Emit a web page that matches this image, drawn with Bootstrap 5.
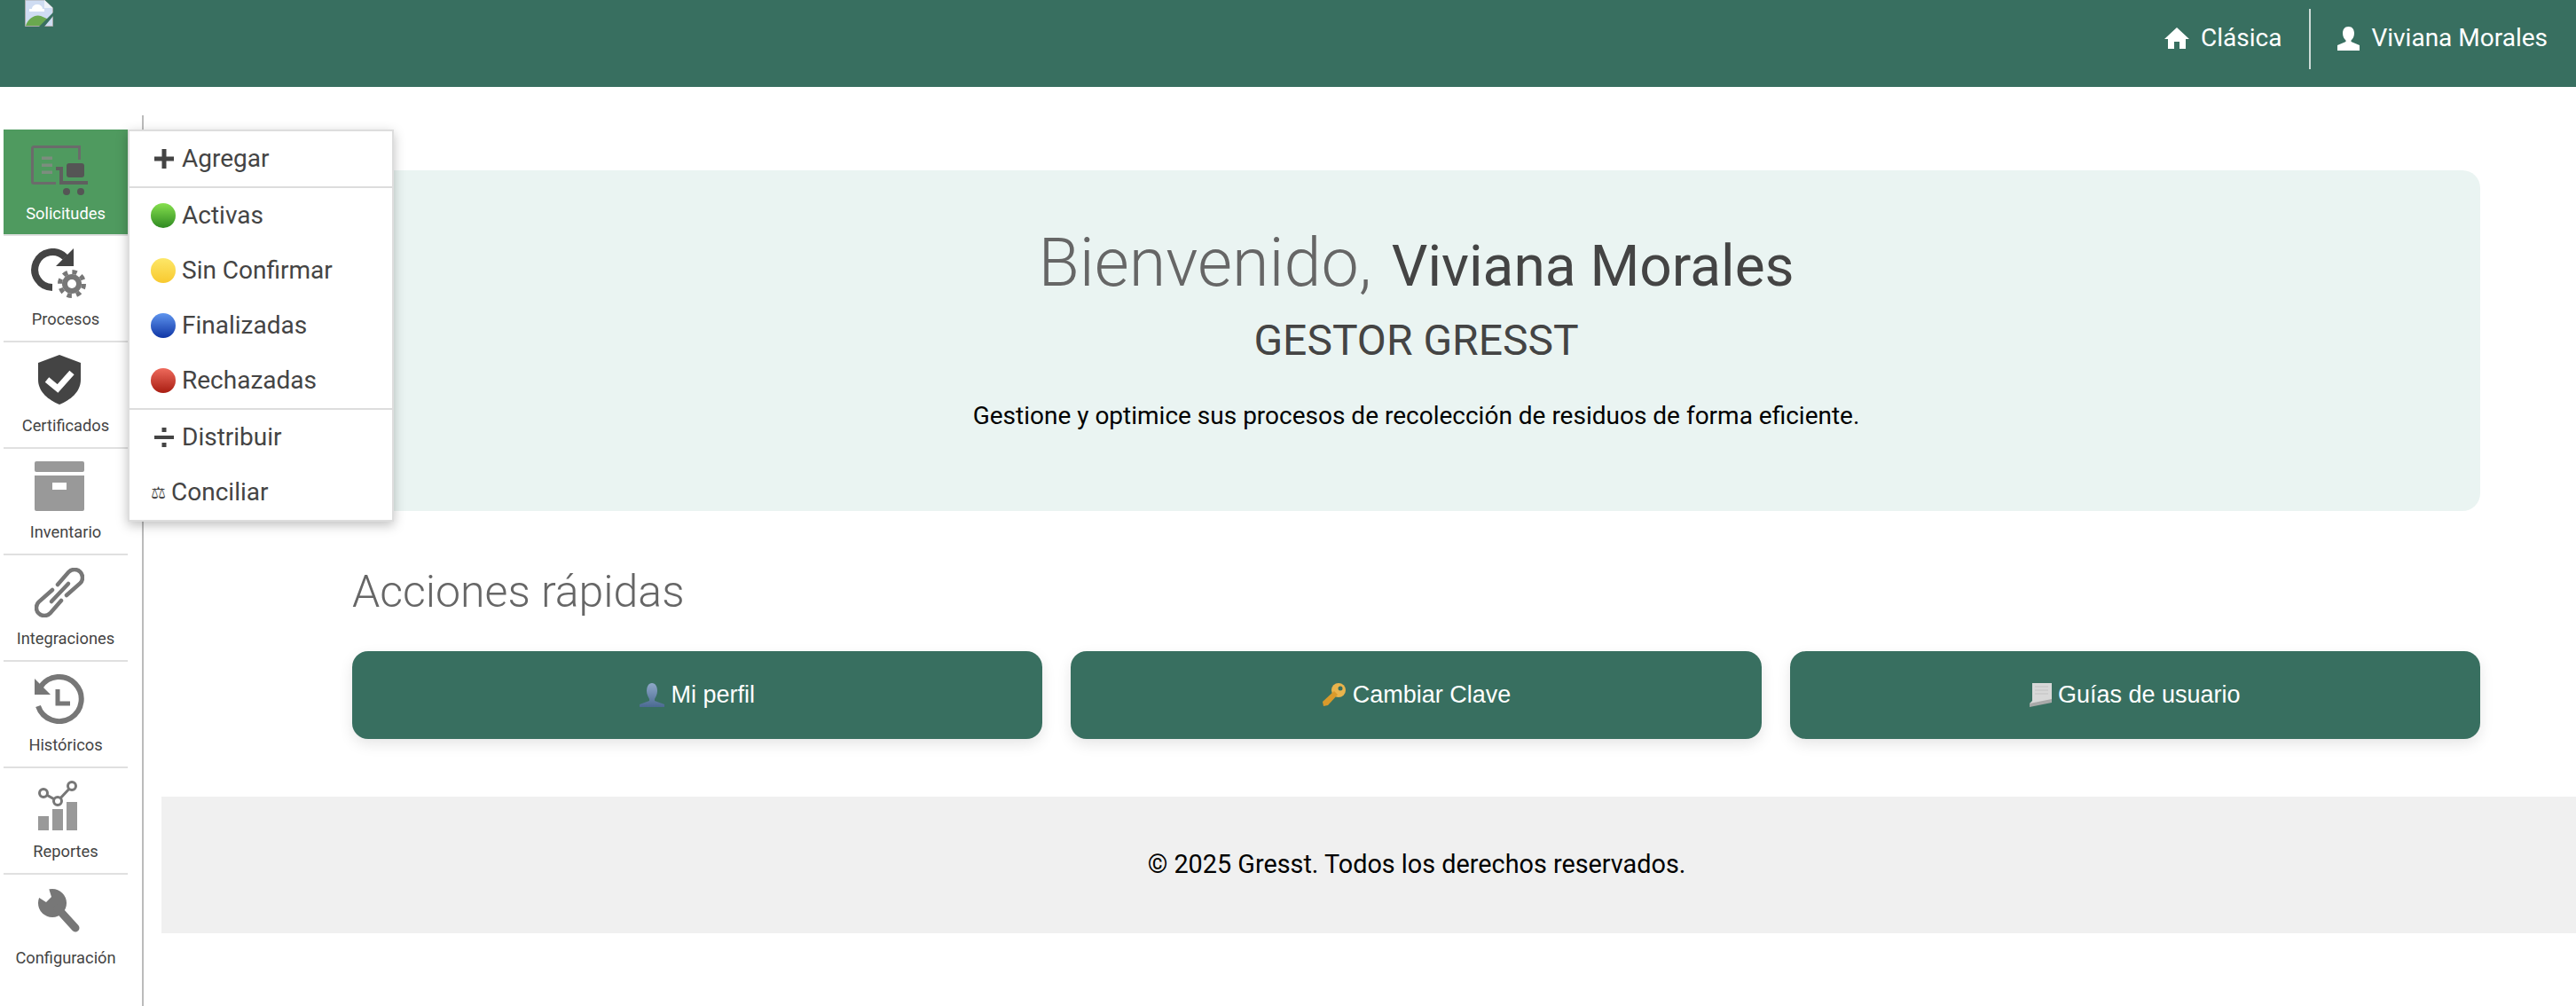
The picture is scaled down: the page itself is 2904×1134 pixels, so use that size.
<!DOCTYPE html>
<html lang="es">
<head>
  <meta charset="UTF-8" />
  <title>Gresst</title>
  <link href="https://cdn.jsdelivr.net/npm/bootstrap@5.3.3/dist/css/bootstrap.min.css" rel="stylesheet">
  <style>
    body { font-family: Roboto, sans-serif; background: #fff; height: 1134px; overflow: hidden; }
    .topbar { height: 98px; background: #386f60; padding: 0 32px 0 28px; align-items: flex-start; color: #fff; flex: none; }
    .topbar-link { color: #fff; font-size: 28px; line-height: 34px; text-decoration: none; gap: 13px; margin-top: 26px; }
    .topbar-sep { width: 2px; height: 68px; background: rgba(255,255,255,.75); margin: 10px 30px 0 31px; }
    .topbar-right { height: 88px; }
    .side-wrap { width: 162px; flex: none; margin-top: 32px; border-right: 2px solid #bbb; padding: 16px 16px 0 4px; }
    .side-item { height: 120px; border-bottom: 2px solid #e0e0e0; color: #444; font-size: 18.3px; line-height: 24px; text-decoration: none; padding-top: 14px; }
    .side-item:last-child { border-bottom: 0; }
    .side-item svg { display: block; height: 56px; margin-left: 35px; }
    .side-item span { display: block; text-align: center; margin-top: 12px; }
    .side-item.is-active { background: #4f9a5f; color: #fff; padding-top: 18px; }
    .side-item.is-active span { margin-top: 9px; }
    .fly-menu { display: block; left: 140px; top: 0; width: 300px; padding: 0; border: 2px solid #ddd; border-radius: 0; box-shadow: 0 4px 12px rgba(0,0,0,.25); margin: 0; }
    .fly-menu .dropdown-item { height: 62px; color: #444; font-size: 28px; line-height: 62px; padding: 0 0 0 24px; display: flex; align-items: center; gap: 7px; }
    .fly-menu .dropdown-divider { margin: 0; border-top: 2px solid #ddd; opacity: 1; }
    .fly-menu svg { flex: none; }
    .glyph-plain { margin-left: 4px; margin-right: 2px; }
    .scale-glyph { font-family: "DejaVu Sans", sans-serif; font-size: 19px; color: #444; margin-right: -1px; }
    .main-area { flex: 1; min-width: 0; padding-top: 94px; }
    .main-inner { padding: 0 108px 0 235px; }
    .hero-box { height: 384px; background: #eaf4f2; border-radius: 20px; text-align: center; padding-top: 62px; }
    .hero-title { font-size: 75.5px; line-height: 84px; font-weight: 300; color: #666; margin: 0; }
    .hero-title b { font-size: 64px; font-weight: 400; color: #444; margin-left: 4px; }
    .hero-sub { font-size: 48px; line-height: 56px; font-weight: 400; color: #444; margin: 13px 0 0; }
    .hero-text { font-size: 28px; line-height: 36px; color: #000; margin: 39px 0 0; }
    .quick-title { font-size: 50px; line-height: 60px; font-weight: 300; color: #666; margin: 61px 0 0; }
    .quick-row { gap: 32px; margin-top: 37px; }
    .quick-btn { flex: 1; height: 99px; background: #386f60; border: 0; border-radius: 18px; color: #fff; font-family: "Liberation Sans", sans-serif; font-size: 27px; box-shadow: 0 6px 16px rgba(0,0,0,.1); gap: 7px; }
    .quick-btn:hover { background: #386f60; color: #fff; }
    .foot-bar { margin: 65px 0 0 20px; height: 154px; background: #f0f0f0; padding-left: 108px; color: #000; font-size: 28.8px; }
  </style>
</head>
<body class="d-flex flex-column">
  <nav class="navbar topbar d-flex justify-content-between">
    <svg width="32" height="30" viewBox="0 0 32 30">
      <path d="M.5 0H22L31.5 9V29.5H.5Z" fill="#cfdcf2" stroke="#aaa"/>
      <path d="M8 10a6 5 0 0 1 12 0h2v3H5v-3Z" fill="#fff"/>
      <path d="M1 29C4 20 12 16 18 18L27 22L19 29Z" fill="#6aa84f"/>
      <path d="M16 30L32 14V18L22 30Z" fill="#386f60"/>
      <path d="M22 0V9H31.5Z" fill="#eef2f8"/>
    </svg>
    <div class="d-flex align-items-start topbar-right">
      <a href="#" class="topbar-link d-flex align-items-center">
        <svg width="28" height="24" viewBox="0 0 28 24"><path d="M14 0L28 13H24V24H17V16H11V24H4V13H0Z" fill="#fff"/></svg>
        Clásica
      </a>
      <div class="topbar-sep"></div>
      <a href="#" class="topbar-link d-flex align-items-center">
        <svg width="25" height="27" viewBox="0 0 25 27"><path d="M12.5 0C17 0 19 3.500 19 7.500C19 11 17.500 14 15.500 15.500V17L25 21V27H0V21L9.500 17V15.500C7.500 14 6 11 6 7.500C6 3.500 8 0 12.500 0Z" fill="#fff"/></svg>
        Viviana Morales
      </a>
    </div>
  </nav>

  <div class="d-flex flex-grow-1">
    <div class="side-wrap">
      <div class="position-relative">
        <a href="#" class="side-item is-active d-block">
          <svg width="64" viewBox="0 0 64 56" style="margin-left:31px">
            <path d="M28 42.500H3A1.500 1.500 0 0 1 1.500 41V3A1.500 1.500 0 0 1 3 1.500H54.500V16" fill="none" stroke="#6b6b6b" stroke-width="3"/>
            <path d="M12 12.500h12v3.500H12zM12 20.500h12v3.500H12zM12 28.500h12v3.500H12z" fill="#7c8d7e"/>
            <path d="M28 26h6v16h30" fill="none" stroke="#5f5f5f" stroke-width="4"/>
            <rect x="40" y="20" width="20" height="16" rx="3" fill="#555"/>
            <circle cx="40" cy="52" r="4" fill="#555"/><circle cx="56" cy="52" r="4" fill="#555"/>
          </svg>
          <span>Solicitudes</span>
        </a>
        <ul class="dropdown-menu fly-menu position-absolute">
          <li><a class="dropdown-item" href="#"><svg class="glyph-plain" width="22" height="22" viewBox="0 0 22 22"><path d="M8.500 0h5v8.500H22v5h-8.500V22h-5v-8.500H0v-5h8.500Z" fill="#444"/></svg>Agregar</a></li>
          <li><hr class="dropdown-divider"></li>
          <li><a class="dropdown-item" href="#"><svg width="28" height="28" viewBox="0 0 28 28"><defs><linearGradient id="dotG" x1="0" y1="0" x2="0" y2="1"><stop offset="0" stop-color="#86e04e"/><stop offset="1" stop-color="#2f8a22"/></linearGradient></defs><circle cx="14" cy="14" r="14" fill="url(#dotG)"/></svg>Activas</a></li>
          <li><a class="dropdown-item" href="#"><svg width="28" height="28" viewBox="0 0 28 28"><defs><linearGradient id="dotY" x1="0" y1="0" x2="0" y2="1"><stop offset="0" stop-color="#fde768"/><stop offset="1" stop-color="#f8c92f"/></linearGradient></defs><circle cx="14" cy="14" r="14" fill="url(#dotY)"/></svg>Sin Confirmar</a></li>
          <li><a class="dropdown-item" href="#"><svg width="28" height="28" viewBox="0 0 28 28"><defs><linearGradient id="dotB" x1="0" y1="0" x2="0" y2="1"><stop offset="0" stop-color="#5f95ee"/><stop offset="1" stop-color="#0f35a5"/></linearGradient></defs><circle cx="14" cy="14" r="14" fill="url(#dotB)"/></svg>Finalizadas</a></li>
          <li><a class="dropdown-item" href="#"><svg width="28" height="28" viewBox="0 0 28 28"><defs><linearGradient id="dotR" x1="0" y1="0" x2="0" y2="1"><stop offset="0" stop-color="#ee6a5c"/><stop offset="1" stop-color="#a91d12"/></linearGradient></defs><circle cx="14" cy="14" r="14" fill="url(#dotR)"/></svg>Rechazadas</a></li>
          <li><hr class="dropdown-divider"></li>
          <li><a class="dropdown-item" href="#"><svg class="glyph-plain" width="22" height="22" viewBox="0 0 22 22"><path d="M0 9h22v4H0zM8.500 0h5v5h-5zM8.500 17h5v5h-5z" fill="#444"/></svg>Distribuir</a></li>
          <li><a class="dropdown-item" href="#"><span class="scale-glyph">⚖</span>Conciliar</a></li>
        </ul>
      </div>
      <a href="#" class="side-item d-block">
        <svg width="64" viewBox="0 0 64 56" style="margin-left:31px">
          <path d="M38.500 10A20 20 0 1 0 24 44" fill="none" stroke="#444" stroke-width="8"/>
          <path d="M48 0V20H28Z" fill="#444"/>
          <circle cx="46" cy="40" r="11" fill="#777"/>
          <circle cx="46" cy="40" r="13.500" fill="none" stroke="#777" stroke-width="5" stroke-dasharray="5.300 5.300"/>
          <circle cx="46" cy="40" r="5" fill="#fff"/>
        </svg>
        <span>Procesos</span>
      </a>
      <a href="#" class="side-item d-block">
        <svg width="48" viewBox="0 0 48 56" style="margin-left:39px">
          <path d="M24 0L48 9V28C48 42 36 51 24 56C12 51 0 42 0 28V9Z" fill="#444"/>
          <path d="M10 28L22 38L38 20" fill="none" stroke="#fff" stroke-width="7"/>
        </svg>
        <span>Certificados</span>
      </a>
      <a href="#" class="side-item d-block">
        <svg width="56" viewBox="0 0 56 56">
          <rect width="56" height="12" rx="2" fill="#999"/>
          <path d="M0 16H56V54a2 2 0 0 1-2 2H2a2 2 0 0 1-2-2Z" fill="#999"/>
          <rect x="20" y="24" width="16" height="8" fill="#fff"/>
        </svg>
        <span>Inventario</span>
      </a>
      <a href="#" class="side-item d-block">
        <svg width="56" viewBox="0 0 56 56">
          <g fill="none" stroke="#777" stroke-width="4.500" stroke-linecap="round">
            <path d="M26 19L38.600 4.600A9 9 0 0 1 51.400 17.400L36 31"/>
            <path d="M30 37L17.400 51.400A9 9 0 0 1 4.600 38.600L20 25"/>
            <path d="M19 38L38 18"/>
          </g>
        </svg>
        <span>Integraciones</span>
      </a>
      <a href="#" class="side-item d-block">
        <svg width="56" viewBox="0 0 56 56">
          <path d="M7 14A25 25 0 1 1 4 36" fill="none" stroke="#777" stroke-width="6"/>
          <path d="M0 5V23H18Z" fill="#777"/>
          <path d="M26 17V33H40" fill="none" stroke="#777" stroke-width="5"/>
        </svg>
        <span>Históricos</span>
      </a>
      <a href="#" class="side-item d-block">
        <svg width="44" viewBox="0 0 44 56" style="margin-left:39px">
          <path d="M0 40h12v16H0zM16 32h12v24H16zM32 24h12v32H32z" fill="#999"/>
          <path d="M6 14L22 23L38 6" fill="none" stroke="#777" stroke-width="3"/>
          <circle cx="6" cy="14" r="4.500" fill="#fff" stroke="#777" stroke-width="3"/>
          <circle cx="22" cy="23" r="4.500" fill="#fff" stroke="#777" stroke-width="3"/>
          <circle cx="38" cy="6" r="4.500" fill="#fff" stroke="#777" stroke-width="3"/>
        </svg>
        <span>Reportes</span>
      </a>
      <a href="#" class="side-item d-block">
        <svg width="48" viewBox="0 0 48 56" style="margin-left:39px">
          <circle cx="16" cy="18" r="16" fill="#777"/>
          <path d="M22 24L42 46" stroke="#777" stroke-width="9" stroke-linecap="round"/>
          <path d="M-2 10L9 17L15 11L11 -2H-2Z" fill="#fff"/>
        </svg>
        <span>Configuración</span>
      </a>
    </div>

    <div class="main-area">
      <div class="main-inner">
        <div class="hero-box">
          <h1 class="hero-title">Bienvenido, <b>Viviana Morales</b></h1>
          <h3 class="hero-sub">GESTOR GRESST</h3>
          <p class="hero-text">Gestione y optimice sus procesos de recolección de residuos de forma eficiente.</p>
        </div>
        <h2 class="quick-title">Acciones rápidas</h2>
        <div class="d-flex quick-row">
          <button class="btn quick-btn d-flex align-items-center justify-content-center">
            <svg width="28" height="27" viewBox="0 0 28 27"><defs><linearGradient id="bust" x1="0" y1="0" x2="0" y2="1"><stop offset="0" stop-color="#8ea8c8"/><stop offset="1" stop-color="#4b6a92"/></linearGradient></defs><path d="M14 0C18 0 20 4 20 9C20 13 18 16 17 18V20L28 24V27H0V24L11 20V18C10 16 8 13 8 9C8 4 10 0 14 0Z" fill="url(#bust)"/></svg>
            Mi perfil
          </button>
          <button class="btn quick-btn d-flex align-items-center justify-content-center">
            <svg width="28" height="27" viewBox="0 0 28 27"><circle cx="19" cy="8" r="8" fill="#e9b44c"/><circle cx="21" cy="6" r="2.500" fill="#386f60"/><path d="M14 9L18 13L7 25L2 26L1 21Z" fill="#d99a2b"/></svg>
            Cambiar Clave
          </button>
          <button class="btn quick-btn d-flex align-items-center justify-content-center">
            <svg width="25" height="27" viewBox="0 0 25 27"><path d="M3 0H25V21L0 26V23L3 20Z" fill="#d8d8d8"/><path d="M0 23L25 18V22L0 27Z" fill="#a9a9a9"/><path d="M6 4h15M6 8h15M6 12h15" stroke="#c2c2c2"/></svg>
            Guías de usuario
          </button>
        </div>
      </div>
      <footer class="foot-bar d-flex align-items-center justify-content-center">© 2025 Gresst. Todos los derechos reservados.</footer>
    </div>
  </div>
  <script src="https://cdn.jsdelivr.net/npm/bootstrap@5.3.3/dist/js/bootstrap.bundle.min.js"></script>
</body>
</html>
